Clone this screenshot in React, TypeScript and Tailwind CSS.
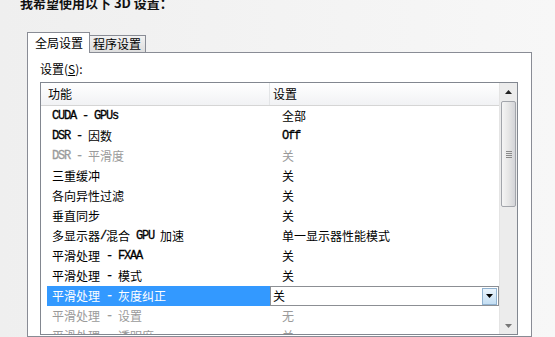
import React from "react";

type Row = { a: string; b: string; gray?: boolean; sel?: boolean };

const rows: Row[] = [
  { a: "CUDA - GPUs", b: "全部" },
  { a: "DSR - 因数", b: "Off" },
  { a: "DSR - 平滑度", b: "关", gray: true },
  { a: "三重缓冲", b: "关" },
  { a: "各向异性过滤", b: "关" },
  { a: "垂直同步", b: "关" },
  { a: "多显示器/混合 GPU 加速", b: "单一显示器性能模式" },
  { a: "平滑处理 - FXAA", b: "关" },
  { a: "平滑处理 - 模式", b: "关" },
  { a: "平滑处理 - 灰度纠正", b: "关", sel: true },
  { a: "平滑处理 - 设置", b: "无", gray: true },
  { a: "平滑处理 - 透明度", b: "关", gray: true },
];

function T({ s }: { s: string }) {
  const parts = s.split(/([\x00-\x7F]+)/).filter((p) => p.length > 0);
  return (
    <>
      {parts.map((p, i) =>
        /^[\x00-\x7F]+$/.test(p) ? (
          <span
            key={i}
            className="font-['Liberation_Mono',monospace] text-[12px] tracking-[-1.2px] whitespace-pre [-webkit-text-stroke:0.3px_currentColor]"
          >
            {p}
          </span>
        ) : (
          <span key={i}>{p}</span>
        )
      )}
    </>
  );
}

export default function App() {
  return (
    <div className="w-[555px] h-[337px] overflow-hidden bg-gradient-to-r from-[#efefef] to-[#f7f7f7] flex flex-col font-['Noto_Sans_CJK_SC',sans-serif] text-[12px] text-black">
      <div className="h-[32px] pl-[20px] shrink-0">
        <div className="-mt-[5px] leading-[16px] text-[13px] font-bold text-[#111]">
          我希望使用以下 3D 设置：
        </div>
      </div>

      <div className="ml-[27px] flex items-end h-[21px] -mb-[1px] relative z-10 shrink-0">
        <div className="w-[63px] h-[21px] border border-b-0 border-[#898c95] bg-white flex items-center pl-[7px] leading-none pb-[1px]">
          全局设置
        </div>
        <div className="w-[56px] h-[17px] mb-[1px] border-t border-r border-[#898c95] bg-gradient-to-b from-[#f2f2f2] to-[#dedede] flex items-center pl-[3px] leading-none">
          程序设置
        </div>
      </div>

      <div className="ml-[27px] w-[505px] flex-1 border border-[#898c95] bg-white pl-[12px] pt-[8px]">
        <div className="h-[16px] leading-[16px] flex items-center">
          设置(<span className="underline">S</span>):
        </div>
        <div className="mt-[5px] w-[478px] h-[253px] border border-[#828790] flex overflow-hidden">
          <div className="flex-1 flex flex-col overflow-hidden">
            <div className="h-[23px] shrink-0 flex border-b border-[#d5d5d5] bg-gradient-to-b from-white to-[#f1f2f4]">
              <div className="w-[229px] pl-[7px] flex items-center border-r border-[#e3e5e7]">
                功能
              </div>
              <div className="flex-1 pl-[3px] flex items-center">设置</div>
            </div>
            {rows.map((r, i) => (
              <div
                key={i}
                className={`h-[20px] shrink-0 flex ${r.gray ? "text-[#9a9a9a]" : "text-black"}`}
              >
                {r.sel ? (
                  <>
                    <div className="w-[229px] pl-[6px] flex">
                      <div className="flex-1 bg-[#3399ff] text-white pl-[5px] flex items-center">
                        <T s={r.a} />
                      </div>
                    </div>
                    <div className="flex-1 border border-[#8c8f94] bg-white flex items-center pl-[2px]">
                      <span className="flex-1">{r.b}</span>
                      <div className="w-[15px] h-[17px] mr-[1px] border border-[#90b2d0] bg-gradient-to-b from-[#eaf4fc] to-[#c4def3] flex items-center justify-center">
                        <svg width="7" height="4" viewBox="0 0 7 4">
                          <path d="M0 0h7L3.5 4z" fill="#000" />
                        </svg>
                      </div>
                    </div>
                  </>
                ) : (
                  <>
                    <div className="w-[229px] pl-[11px] flex items-center whitespace-nowrap">
                      <T s={r.a} />
                    </div>
                    <div className="flex-1 pl-[12px] flex items-center whitespace-nowrap">
                      <T s={r.b} />
                    </div>
                  </>
                )}
              </div>
            ))}
          </div>
          <div className="w-[18px] shrink-0 bg-[#ececec] border-l border-[#e4e4e4] flex flex-col">
            <div className="h-[18px] shrink-0 flex items-center justify-center">
              <svg width="7" height="4" viewBox="0 0 7 4">
                <path d="M0 4h7L3.5 0z" fill="#222" />
              </svg>
            </div>
            <div className="mx-[1px] h-[106px] shrink-0 rounded-[2px] border border-[#a2a5ab] bg-gradient-to-r from-[#f5f5f5] via-[#e6e6e6] to-[#d3d4d8] flex items-center justify-center">
              <div className="flex flex-col gap-[1px]">
                <div className="w-[6px] h-[1px] bg-[#8a8a8a]" />
                <div className="w-[6px] h-[1px] bg-[#8a8a8a]" />
                <div className="w-[6px] h-[1px] bg-[#8a8a8a]" />
                <div className="w-[6px] h-[1px] bg-[#8a8a8a]" />
              </div>
            </div>
            <div className="flex-1" />
            <div className="h-[17px] shrink-0 flex items-center justify-center">
              <svg width="7" height="4" viewBox="0 0 7 4">
                <path d="M0 0h7L3.5 4z" fill="#777" />
              </svg>
            </div>
          </div>
        </div>
      </div>
    </div>
  );
}
